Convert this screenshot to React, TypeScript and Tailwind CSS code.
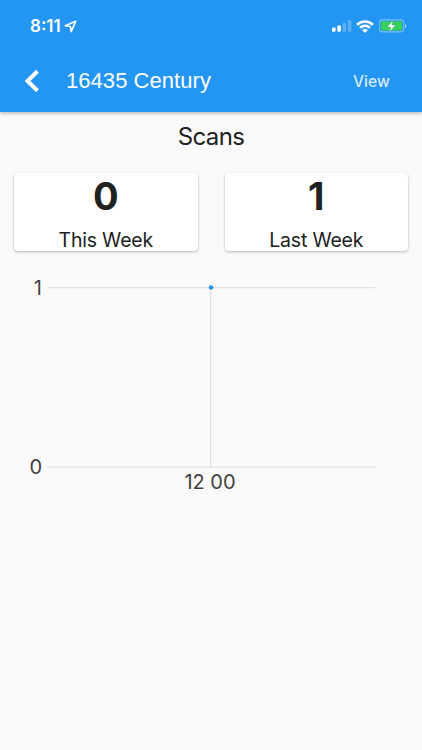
const inter = "font-['Inter',sans-serif]";

function StatusBar() {
  return (
    <div className="flex h-[50px] items-center justify-between pl-[30px] pr-[15px] pt-[2px] text-white">
      <div className="flex items-center gap-[3px]">
        <span className="text-[17px] font-semibold leading-5 tracking-[0px]">8:11</span>
        <svg width="13" height="13" viewBox="0 0 13 13" fill="none" stroke="currentColor" strokeWidth="1.6" strokeLinejoin="round">
          <path d="M11.7 1.2 1.2 5.8 6.300 6.500 7.200 11.600Z" />
        </svg>
      </div>
      <div className="flex items-center">
        <svg width="20" height="12" viewBox="0 0 20 12" fill="currentColor">
          <rect x="0" y="7.5" width="3.6" height="4.300" rx="1" />
          <rect x="5.3" y="5.5" width="3.6" height="6.300" rx="1" />
          <rect x="10.6" y="3" width="3.6" height="8.800" rx="1" opacity=".25" />
          <rect x="15.9" y="0" width="3.6" height="11.800" rx="1" opacity=".25" />
        </svg>
        <svg className="ml-[4px]" width="18" height="13" viewBox="0 0 18 13" fill="none" stroke="currentColor" strokeWidth="2.500">
          <path d="M1.100 4.800A11 11 0 0 1 16.900 4.800" />
          <path d="M4 7.900A7 7 0 0 1 14 7.900" />
          <path d="M9 12.900 6.200 10.200A4 4 0 0 1 11.800 10.200Z" fill="currentColor" stroke="none" />
        </svg>
        <svg className="ml-[5px]" width="28" height="14" viewBox="0 0 28 14">
          <rect x=".2" y=".9" width="24.600" height="12" rx="3.3" fill="none" stroke="#fff" strokeOpacity=".4" strokeWidth="1.1" />
          <path d="M26 5v4c1-.4 1.500-1.100 1.500-2S27 5.400 26 5Z" fill="#fff" fillOpacity=".5" />
          <rect x="1.900" y="2.300" width="21.200" height="9.200" rx="1.800" fill="#34d058" />
          <path d="M14 1.300 8.200 7.900h3.400l-1 5.100 6-7h-3.700Z" fill="#fff" stroke="#2c9f9b" strokeWidth=".4" />
        </svg>
      </div>
    </div>
  );
}

function Header() {
  return (
    <header className="h-[112px] bg-[#2395f2] shadow-[0_1px_4px_rgba(0,0,0,0.32)]">
      <StatusBar />
      <div className="flex h-[62px] items-center pl-[24px] pr-[32px]">
        <svg width="16" height="24" viewBox="0 0 16 24" fill="none" stroke="#fff" strokeWidth="4">
          <path d="M13.500 2.300 3.500 12l10 9.700" />
        </svg>
        <h1 className="ml-[26px] grow font-['Liberation_Sans',sans-serif] text-[22px] leading-7 tracking-[0.05px] text-white">16435 Century</h1>
        <button className="pt-px text-[15.500px] font-medium leading-5 tracking-[0.1px] text-white/80">View</button>
      </div>
    </header>
  );
}

function StatCard({ value, label }: { value: string; label: string }) {
  return (
    <div className="flex h-[78px] flex-1 flex-col items-center rounded-[4px] bg-white text-[#212121] shadow-[0_1px_3px_rgba(0,0,0,0.28)]">
      <div className="h-[45px] pt-px text-[38px] font-bold leading-[45px]">{value}</div>
      <div className="mt-[10px] text-[19.500px] leading-6 tracking-[-0.2px]">{label}</div>
    </div>
  );
}

function ScanChart() {
  return (
    <svg className="block" width="422" height="250" viewBox="0 0 422 250" fontSize="20" fill="#424242">
      <g stroke="#e2e2e2" strokeWidth="1.300">
        <path d="M47.500 36.600H375M47.500 216.200H375M210.700 36.600V216.200" />
      </g>
      <circle cx="211" cy="36.500" r="2.300" fill="#2395f2" />
      <text x="42" y="44" textAnchor="end">1</text>
      <text x="42" y="223" textAnchor="end">0</text>
      <text x="210" y="238" textAnchor="middle">12 00</text>
    </svg>
  );
}

export default function App() {
  return (
    <div className={`h-[750px] w-[422px] overflow-hidden bg-[#fafafa] ${inter}`}>
      <Header />
      <main>
        <h2 className="pt-[10px] text-center text-[24px] leading-[30px] tracking-[-0.6px] text-[#212121]">Scans</h2>
        <div className="mt-[21px] flex gap-[27px] px-[14px]">
          <StatCard value="0" label="This Week" />
          <StatCard value="1" label="Last Week" />
        </div>
        <ScanChart />
      </main>
    </div>
  );
}
